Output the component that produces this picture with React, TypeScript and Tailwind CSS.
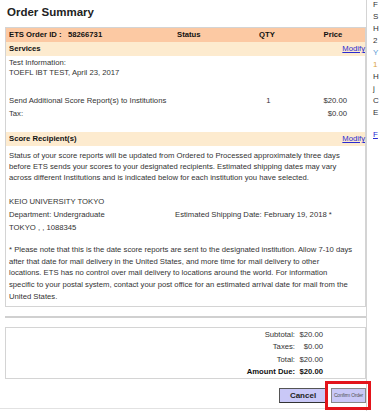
import React from 'react';

const sideLines = [
  { t: 'F', c: 'text-[#333]' },
  { t: 'S', c: 'text-[#333]' },
  { t: 'H', c: 'text-[#333]' },
  { t: '2', c: 'text-[#333]' },
  { t: 'Y', c: 'text-[#5b9bd5]' },
  { t: '1', c: 'text-[#d9a441]' },
  { t: 'H', c: 'text-[#333]' },
  { t: 'j', c: 'text-[#333]' },
  { t: 'C', c: 'text-[#333]' },
  { t: 'E', c: 'text-[#333]' },
];

export default function App() {
  return (
    <div className="w-[381px] h-[411px] overflow-hidden bg-white flex font-['Liberation_Sans',Arial,sans-serif] text-[#333]">
      {/* Main column */}
      <div className="w-[366px] shrink-0 flex flex-col">
        <h1 className="pl-[7px] pt-[5px] h-[27px] text-[11.5px] font-bold text-[#222] leading-[14px]">Order Summary</h1>

        <div className="ml-[5px] border border-[#d4d4d4] text-[7.7px] leading-[10px]">
          {/* Header */}
          <div className="flex items-center h-[14px] bg-[#fcc9a3] font-bold text-[#111]">
            <div className="w-[165px] pl-[3px]">ETS Order ID :&nbsp;&nbsp;&nbsp;58266731</div>
            <div className="w-[70px] pl-[6px]">Status</div>
            <div className="w-[52px] text-center">QTY</div>
            <div className="flex-1 text-center pl-[8px]">Price</div>
          </div>

          {/* Services */}
          <div className="flex items-center justify-between h-[14px] bg-[#fdebcf] pl-[3px]">
            <span className="font-bold text-[#111]">Services</span>
            <a className="text-[#2a2ad0] underline">Modify</a>
          </div>

          <div className="pl-[3px] pt-[2px] pb-[12px]">
            <div>Test Information:</div>
            <div>TOEFL IBT TEST, April 23, 2017</div>
            <div className="flex mt-[16px] h-[13px] items-center">
              <div className="w-[232px]">Send Additional Score Report(s) to Institutions</div>
              <div className="w-[55px] text-center">1</div>
              <div className="w-[51px] text-right">$20.00</div>
            </div>
            <div className="flex h-[13px] items-center">
              <div className="w-[287px]">Tax:</div>
              <div className="w-[51px] text-right">$0.00</div>
            </div>
          </div>

          {/* Score Recipients */}
          <div className="flex items-center justify-between h-[14px] bg-[#fdebcf] pl-[3px]">
            <span className="font-bold text-[#111]">Score Recipient(s)</span>
            <a className="text-[#2a2ad0] underline">Modify</a>
          </div>

          <div className="pl-[3px] pt-[4px] pb-[3px] leading-[11px] whitespace-nowrap">
            <p>
              Status of your score reports will be updated from Ordered to Processed approximately three days<br />
              before ETS sends your scores to your designated recipients. Estimated shipping dates may vary<br />
              across different Institutions and is indicated below for each institution you have selected.
            </p>
            <div className="mt-[11.5px] leading-[13px]">
              <div>KEIO UNIVERSITY TOKYO</div>
              <div className="flex">
                <div className="w-[166px]">Department: Undergraduate</div>
                <div>Estimated Shipping Date: February 19, 2018 *</div>
              </div>
              <div>TOKYO , , 1088345</div>
            </div>
            <p className="mt-[10.5px] leading-[11.7px]">
              * Please note that this is the date score reports are sent to the designated institution. Allow 7-10 days<br />
              after that date for mail delivery in the United States, and more time for mail delivery to other<br />
              locations. ETS has no control over mail delivery to locations around the world. For information<br />
              specific to your postal system, contact your post office for an estimated arrival date for mail from the<br />
              United States.
            </p>
          </div>
        </div>

        <div className="ml-[5px] mt-[9px] h-[2px] bg-[#d0d0d0]" />

        {/* Totals */}
        <div className="ml-[5px] mt-[9px] h-[52px] border border-[#d4d4d4] text-[7.7px] leading-[12.5px] pt-[1px]">
          {[
            ['Subtotal:', '$20.00', false],
            ['Taxes:', '$0.00', false],
            ['Total:', '$20.00', false],
            ['Amount Due:', '$20.00', true],
          ].map(([label, value, bold]) => (
            <div key={label as string} className={`flex ${bold ? 'font-bold text-[#111]' : ''}`}>
              <div className="w-[289px] text-right">{label}</div>
              <div className="w-[28px] text-right">{value}</div>
            </div>
          ))}
        </div>

        {/* Buttons */}
        <div className="relative flex justify-end items-center gap-[4px] mt-[9px] h-[16px]">
          <button className="w-[48px] h-[15px] bg-[#c9c8f7] border border-[#555] border-b-[#333] text-[8px] font-bold text-[#222] leading-[13px]">
            Cancel
          </button>
          <button className="w-[35px] h-[15px] bg-[#c9c8f7] border border-[#888] text-[5px] text-[#555] leading-[13px] tracking-[-0.2px]">
            Confirm Order
          </button>
          <div className="absolute right-[-5px] top-[-7px] w-[46px] h-[29px] border-[3px] border-[#e3141b]" />
        </div>
        <div className="mt-[4px] h-[1px] bg-[#e2e2e2]" />
      </div>

      {/* Sidebar, clipped by the window */}
      <div className="border-l border-[#d4d4d4] pl-[6px] text-[8px] leading-[12px] whitespace-nowrap">
        <div className="-mt-[1px]">
          {sideLines.map((l, i) => (
            <div key={i} className={l.c}>{l.t}</div>
          ))}
          <div className="h-[10px]" />
          <a className="text-[#2a2ad0] underline">F</a>
        </div>
      </div>
    </div>
  );
}
